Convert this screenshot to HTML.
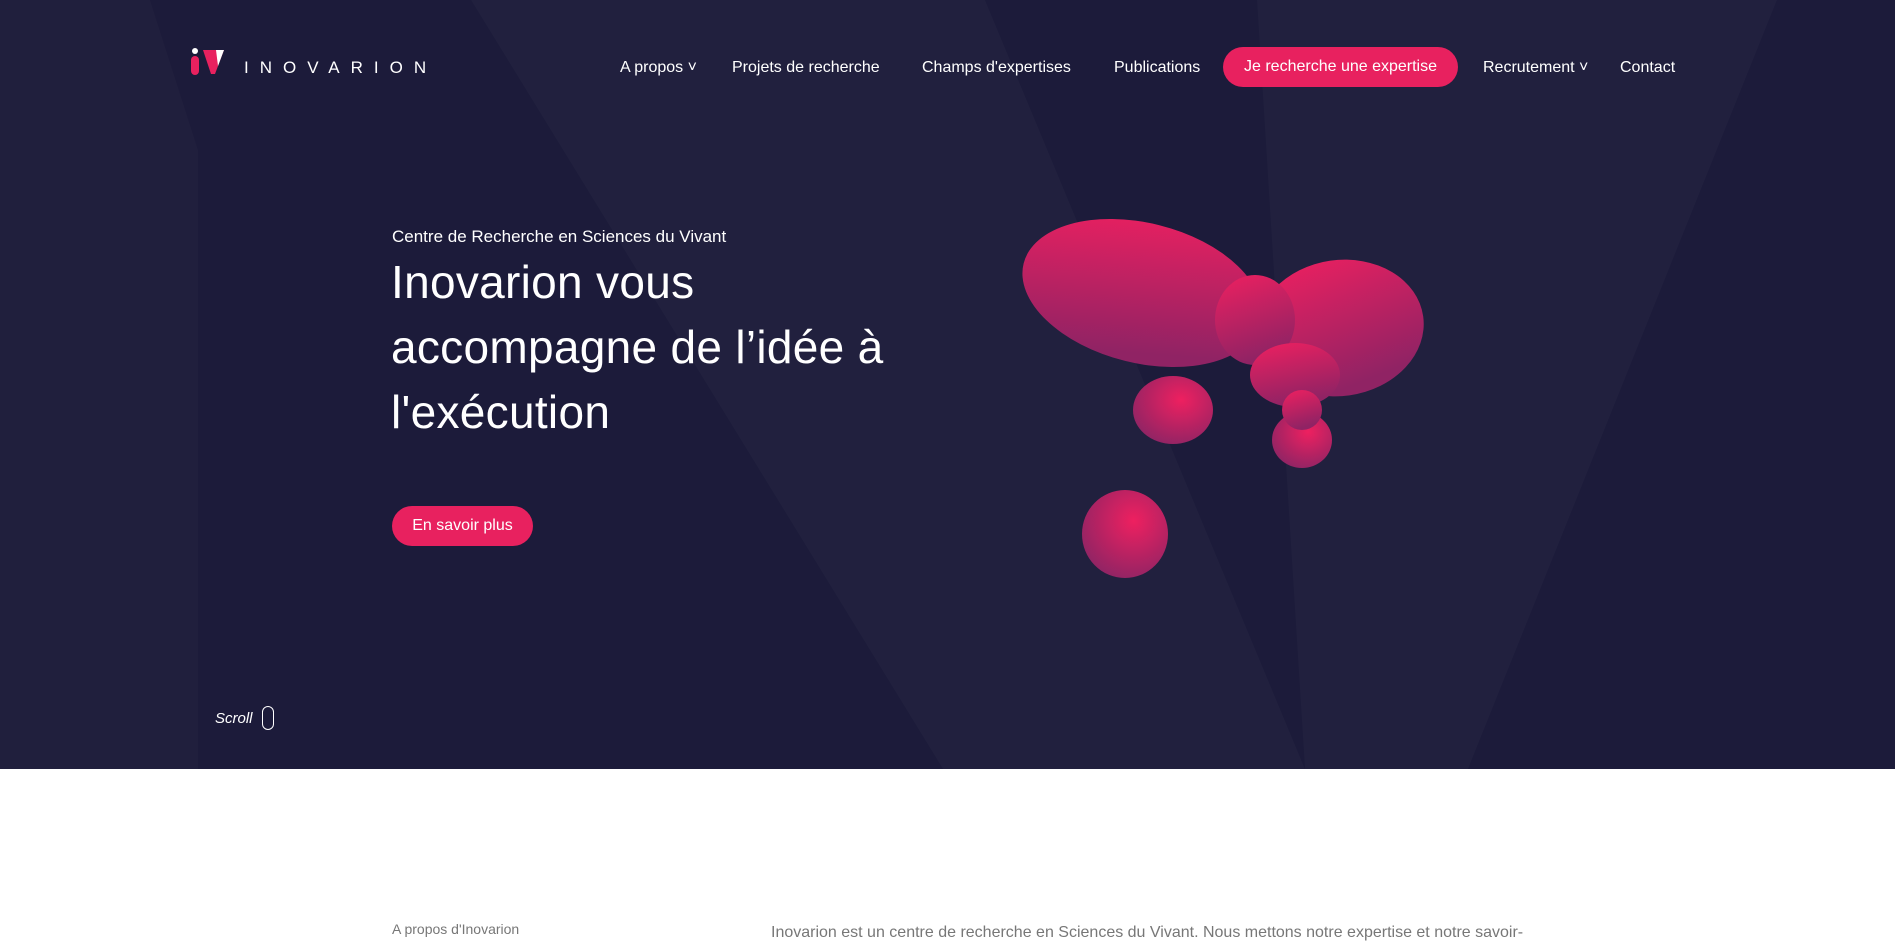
<!DOCTYPE html>
<html><head><meta charset="utf-8"><style>
*{margin:0;padding:0;box-sizing:border-box}
body{width:1895px;height:935px;overflow:hidden;background:#fff;font-family:"Liberation Sans",sans-serif}
.hero{position:absolute;left:0;top:0;width:1895px;height:769px;background:#1c1b3a;overflow:hidden}
.t{position:absolute;color:#fff;white-space:nowrap}
.nav{font-size:16px;top:59px}
.btn{position:absolute;background:#e8215f;color:#fff;border-radius:20px;font-size:16px;display:flex;align-items:center;justify-content:center}
</style></head><body>
<div class="hero">
<svg width="1895" height="769" style="position:absolute;left:0;top:0">
<polygon points="471,0 985,0 1305,769 943,769" fill="#21203e"/>
<polygon points="1257,0 1777,0 1468,769 1305,769" fill="#21203e"/>
<polygon points="0,0 150,0 198,150 198,769 0,769" fill="#201f3d"/>
<defs>
<linearGradient id="g" x1="0" y1="0" x2="0.3" y2="1"><stop offset="0" stop-color="#ee2060"/><stop offset="1" stop-color="#902364"/></linearGradient>
<radialGradient id="r" cx="0.6" cy="0.35" r="0.7"><stop offset="0" stop-color="#ee2060"/><stop offset="1" stop-color="#8f2464"/></radialGradient>
</defs>
<ellipse cx="1142" cy="293" rx="122" ry="70" transform="rotate(14 1142 293)" fill="url(#g)"/>
<ellipse cx="1340" cy="328" rx="84" ry="68" transform="rotate(-8 1340 328)" fill="url(#g)"/>
<ellipse cx="1255" cy="320" rx="40" ry="45" fill="url(#g)"/>
<ellipse cx="1295" cy="375" rx="45" ry="32" fill="url(#g)"/>
<ellipse cx="1173" cy="410" rx="40" ry="34" fill="url(#r)"/>
<ellipse cx="1302" cy="440" rx="30" ry="28" fill="url(#r)"/>
<ellipse cx="1302" cy="410" rx="20" ry="20" fill="url(#g)"/>
<ellipse cx="1125" cy="534" rx="43" ry="44" fill="url(#r)"/>
</svg>
<svg style="position:absolute;left:190px;top:48px" width="36" height="28">
<rect x="1" y="8" width="8" height="19" rx="4" fill="#e8215f"/><circle cx="5" cy="3" r="3" fill="#fff"/>
<path d="M13 2 L21 26 L25 26 L34 2 Z" fill="#e8215f"/><path d="M26 2 L34 2 L28 18 Z" fill="#fff"/>
</svg>
<div class="t" style="left:244px;top:58px;font-size:17px;letter-spacing:11px;font-weight:300">INOVARION</div>
<div class="t nav" style="left:620px">A propos ˅</div>
<div class="t nav" style="left:732px">Projets de recherche</div>
<div class="t nav" style="left:922px">Champs d'expertises</div>
<div class="t nav" style="left:1114px">Publications</div>
<div class="btn" style="left:1223px;top:47px;width:235px;height:40px">Je recherche une expertise</div>
<div class="t nav" style="left:1483px">Recrutement ˅</div>
<div class="t nav" style="left:1620px">Contact</div>
<div class="t" style="left:392px;top:227px;font-size:17px">Centre de Recherche en Sciences du Vivant</div>
<div class="t" style="left:391px;top:250px;font-size:46px;line-height:65px;letter-spacing:0.3px">Inovarion vous<br>accompagne de l’idée à<br>l'exécution</div>
<div class="btn" style="left:392px;top:506px;width:141px;height:40px">En savoir plus</div>
<div class="t" style="left:215px;top:710px;font-size:15px;font-style:italic">Scroll</div>
<div style="position:absolute;left:262px;top:706px;width:12px;height:24px;border:1.5px solid #fff;border-radius:6px"></div>
</div>
<div style="position:absolute;left:392px;top:921px;font-size:14px;color:#777;white-space:nowrap">A propos d'Inovarion</div>
<div style="position:absolute;left:771px;top:924px;font-size:16px;color:#777;white-space:nowrap">Inovarion est un centre de recherche en Sciences du Vivant. Nous mettons notre expertise et notre savoir-</div>
</body></html>
